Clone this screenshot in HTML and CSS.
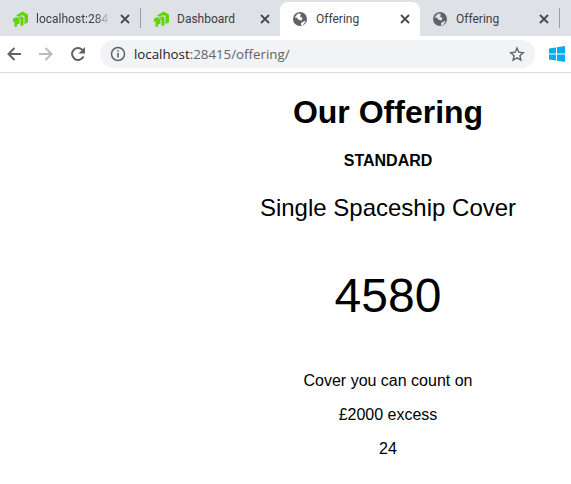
FILE: index.html
```html
<!DOCTYPE html>
<html lang="en">
<head>
<meta charset="utf-8">
<title>Offering</title>
<link rel="stylesheet" href="styles.css">
</head>
<body>
<div class="tabstrip">
  <div class="tab tab-first">
    <svg class="favicon" viewBox="0 0 16 16"><path class="green" d="M4 4.500L10.500.5 16 3.500V11.500L12.500 13V5.500L10 4 7 6z"/><path class="green" d="M6.500 7L9.500 5.300 11.500 6.500V14L8.500 15.300V8.500z"/><path class="green" d="M1 7.500L4.500 6 7.500 8V12.500L5 13.500V15.500L2.500 16V10.500L1 11z"/></svg>
    <span class="tab-title tab-fade">localhost:28415</span>
    <svg class="close" viewBox="0 0 10 10"><path d="M1 1l8 8M9 1l-8 8"/></svg>
  </div>
  <div class="sep"></div>
  <div class="tab tab-second">
    <svg class="favicon" viewBox="0 0 16 16"><path class="green" d="M4 4.500L10.500.5 16 3.500V11.500L12.500 13V5.500L10 4 7 6z"/><path class="green" d="M6.500 7L9.500 5.300 11.500 6.500V14L8.500 15.300V8.500z"/><path class="green" d="M1 7.500L4.500 6 7.500 8V12.500L5 13.500V15.500L2.500 16V10.500L1 11z"/></svg>
    <span class="tab-title">Dashboard</span>
    <svg class="close" viewBox="0 0 10 10"><path d="M1 1l8 8M9 1l-8 8"/></svg>
  </div>
  <div class="tab tab-active">
    <svg class="favicon" viewBox="0 0 16 16"><circle class="globe" cx="8" cy="8" r="7"/><path class="land" d="M2.500 6.500L6 2.500l3 .5-1 2.500 2.500 1.500-1 2.500-2.500-.5-2.500-2.500zM9 12l3.500-2 1 .5-2.500 3.500-2 .5z"/></svg>
    <span class="tab-title">Offering</span>
    <svg class="close" viewBox="0 0 10 10"><path d="M1 1l8 8M9 1l-8 8"/></svg>
  </div>
  <div class="tab tab-last">
    <svg class="favicon" viewBox="0 0 16 16"><circle class="globe" cx="8" cy="8" r="7"/><path class="land-grey" d="M2.500 6.500L6 2.500l3 .5-1 2.500 2.500 1.500-1 2.500-2.500-.5-2.500-2.500zM9 12l3.500-2 1 .5-2.500 3.500-2 .5z"/></svg>
    <span class="tab-title">Offering</span>
    <svg class="close" viewBox="0 0 10 10"><path d="M1 1l8 8M9 1l-8 8"/></svg>
  </div>
  <div class="sep"></div>
</div>
<div class="toolbar">
  <svg class="nav" viewBox="0 0 16 16"><path class="stroke-dark" d="M15 8H2.500M8.500 2L2.500 8l6 6"/></svg>
  <svg class="nav" viewBox="0 0 16 16"><path class="stroke-light" d="M1 8h12.500M7.500 2l6 6-6 6"/></svg>
  <svg class="nav" viewBox="0 0 16 16"><path class="stroke-dark" d="M13.500 10.500A6 6 0 1 1 13 4.500"/><path class="fill-dark" d="M15 1v6.500H8.500z"/></svg>
  <div class="omnibox">
    <svg class="info" viewBox="0 0 16 16"><circle class="info-ring" cx="8" cy="8" r="6.500"/><path class="fill-dark" d="M7.200 7h1.600v4.500H7.200zM7.200 4.200h1.600v1.600H7.200z"/></svg>
    <span class="url"><span class="host">localhost</span>:28415/offering/</span>
    <svg class="star" viewBox="0 0 16 16"><path class="star-path" d="M8 2l1.800 4.200 4.500.5-3.400 3 1 4.500L8 11.900l-3.900 2.300 1-4.500-3.400-3 4.500-.5z"/></svg>
  </div>
  <svg class="win" viewBox="0 0 16 16"><path class="win-path" d="M0 2.500l7-1v6H0zM8 1.300L16 0v7.500H8zM0 8.500h7v6l-7-1zM8 8.500h8V16l-8-1.300z"/></svg>
</div>
<main class="page">
  <h1 class="heading">Our Offering</h1>
  <h3 class="tier">STANDARD</h3>
  <p class="product">Single Spaceship Cover</p>
  <p class="price">4580</p>
  <p class="detail">Cover you can count on</p>
  <p class="detail">£2000 excess</p>
  <p class="detail">24</p>
</main>
</body>
</html>
```
FILE: styles.css
```css
* { box-sizing: border-box; }
html, body { margin: 0; padding: 0; background: #fff; overflow: hidden; }
body { width: 571px; height: 484px; font-family: "Liberation Sans", Arial, sans-serif; color: #000; }

.tabstrip { height: 36px; background: #dee1e6; display: flex; align-items: stretch; padding-top: 2px; }
.tab { display: flex; align-items: center; height: 34px; padding-left: 12px; position: relative; }
.tab-first { width: 140px; }
.tab-second { width: 139px; }
.tab-active { width: 140px; background: #fff; border-radius: 8px 8px 0 0; }
.tab-last { width: 139px; }
.sep { width: 1px; height: 20px; background: #9aa0a6; align-self: center; margin-top: -2px; }
.favicon { width: 16px; height: 16px; flex: none; margin-right: 8px; }
.green { fill: #5fd600; }
.globe { fill: #5f6368; }
.land { fill: #fff; }
.land-grey { fill: #dee1e6; }
.tab-title { font: 12px "Roboto", "Liberation Sans", sans-serif; color: #3c4043; flex: 1; min-width: 0; white-space: nowrap; overflow: hidden; }
.tab-fade { -webkit-mask-image: linear-gradient(to right, #000 80%, transparent 100%); mask-image: linear-gradient(to right, #000 80%, transparent 100%); }
.close { width: 10px; height: 10px; flex: none; margin: 0 10px 0 10px; }
.close path { stroke: #45484c; stroke-width: 1.800; fill: none; }

.toolbar { height: 37px; background: #fff; border-bottom: 1px solid #dadce0; display: flex; align-items: center; padding: 0 0 0 6px; }
.nav { width: 16px; height: 16px; flex: none; margin-right: 16px; }
.stroke-dark { fill: none; stroke: #5f6368; stroke-width: 2; }
.stroke-light { fill: none; stroke: #b8babd; stroke-width: 2; }
.fill-dark { fill: #5f6368; }
.omnibox { width: 435px; height: 28px; margin-left: -2px; border-radius: 14px; background: #f1f3f4; display: flex; align-items: center; padding: 0 10px; }
.info { width: 16px; height: 16px; flex: none; margin-right: 8px; }
.info-ring { fill: none; stroke: #5f6368; stroke-width: 1.500; }
.url { font: 13.300px "Open Sans", "Liberation Sans", sans-serif; color: #5f6368; flex: 1; white-space: nowrap; }
.host { color: #202124; }
.star { width: 16px; height: 16px; flex: none; }
.star-path { fill: none; stroke: #5f6368; stroke-width: 1.400; }
.win { width: 16px; height: 16px; flex: none; margin-left: 14px; }
.win-path { fill: #00adef; }

.page { width: 571px; padding-left: 205px; text-align: center; }
.heading { font-size: 32px; font-weight: bold; line-height: 37px; margin: 21px 0 0; }
.tier { font-size: 16px; font-weight: bold; line-height: 18px; margin: 21px 0 0; }
.product { font-size: 24px; line-height: 28px; margin: 24px 0 0; }
.price { font-size: 48px; line-height: 55px; margin: 46px 0 0; }
.detail { font-size: 16px; line-height: 18px; margin: 16px 0 0; }
.price + .detail { margin-top: 49px; }
```
